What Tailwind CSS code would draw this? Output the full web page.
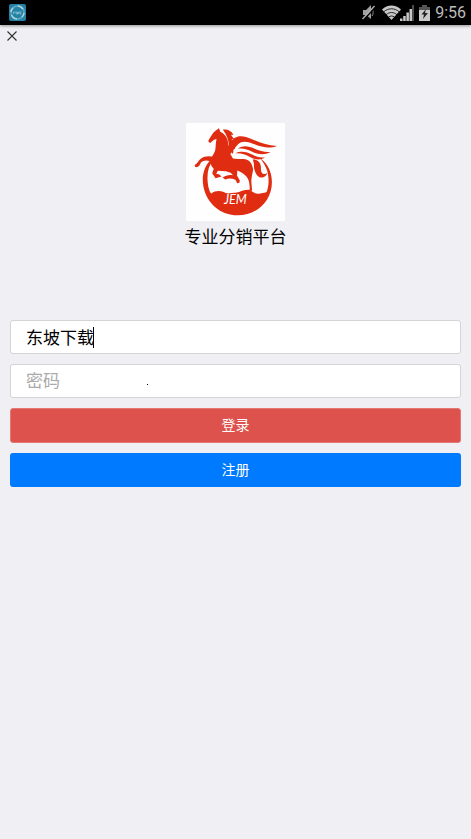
<!DOCTYPE html>
<html lang="zh-CN">
<head>
    <meta charset="UTF-8">
    <meta name="viewport" content="width=device-width, initial-scale=1.0">
    <title>登录</title>
    <script src="https://cdn.jsdelivr.net/npm/@tailwindcss/browser@4"></script>
</head>
<body class="min-h-screen bg-[#efeff4] text-black font-[Roboto,'Noto_Sans_CJK_SC',sans-serif]">

<!-- status bar -->
<div class="h-[25px] bg-black flex items-center justify-between pl-[9px] pr-[5px] shadow-[0_1px_3px_#00000066]">
    <svg class="w-[17px] h-[17px]" viewBox="0 0 17 17" fill="none">
        <rect width="17" height="17" rx="2" fill="#2482a5"/>
        <circle cx="8.500" cy="8.500" r="6.500" stroke="#5fa9c2" stroke-width="1.500"/>
        <path d="M2.500 11A6.500 6.500 0 0 0 8 15M9 2a6.500 6.500 0 0 1 5 3M15 9a6.500 6.500 0 0 1-2 4M2 8a6.500 6.500 0 0 1 2-4" stroke="#b5d3dd" stroke-width="1.500"/>
        <path d="M4.500 10V8h2M7 8h1.500v2H7zM9.500 10V8H11M12.500 8H11v2h1.500" stroke="#8fc3d5" stroke-width=".8"/>
    </svg>
    <div class="flex items-center text-[#bdbdbd]">
        <svg class="w-[15px] h-[17px]" viewBox="0 0 15 17" fill="none">
            <path d="M2 6h3l5-5v14l-5-4H2z" fill="#a0a0a0"/>
            <path d="M11 5c1.500 2 1.500 5 0 7" stroke="#8f8f8f"/>
            <path d="M2.500 16 14 3.500" stroke="#000" stroke-width="1.500"/>
            <path d="M1.500 15 13.500 2" stroke="#b0b0b0" stroke-width="1.300"/>
        </svg>
        <svg class="ml-[6px] w-[19px] h-[15px]" viewBox="0 0 19 15" fill="none">
            <path d="M0 4.500C5.500-.8 13.500-.8 19 4.500L9.500 15z" fill="#c9c9c9"/>
            <path d="M1.500 7C6.500 2.700 12.500 2.700 17.500 7M4 9.700c3.500-2.900 7.500-2.900 11 0M6.500 12.200c2-1.600 4-1.600 6 0" stroke="#000" stroke-width=".8"/>
        </svg>
        <svg class="-ml-px w-[14px] h-[16px]" viewBox="0 0 14 16" fill="#c9c9c9">
            <path d="M0 13.500h2.500V16H0zM3.200 11h2.500v5H3.200zM6.400 7.500h2.500V16H6.400zM9.500 4H12v12H9.500z"/>
            <path d="M12 0h2v16h-2z" fill="#4b4b4b"/>
        </svg>
        <svg class="ml-[5px] w-[11px] h-[16px]" viewBox="0 0 11 16">
            <path d="M3 0h5v2h3v3H0V2h3z" fill="#555"/>
            <path d="M0 5h11v11H0z" fill="#c9c9c9"/>
            <path d="M7 4 2.500 9.500H5L4 14l5-6H6z" fill="#222"/>
        </svg>
        <span class="ml-[5px] text-base leading-6">9:56</span>
    </div>
</div>

<button type="button" aria-label="关闭" class="block ml-[7px] mt-[6px] w-[10px] h-[10px]">
    <svg class="w-[10px] h-[10px]" viewBox="0 0 10 10" stroke="#333" stroke-width="1.100">
        <path d="M.5.5l9 9M9.500.5l-9 9"/>
    </svg>
</button>

<!-- logo -->
<div class="mt-[82px] flex flex-col items-center">
    <svg class="w-[99px] h-[98px]" viewBox="-11 -3 295 295" preserveAspectRatio="none" fill="#e02d12">
        <path d="M-11-3h295v295H-11z" fill="#fefefe"/>
        <!-- ring -->
        <path d="M64 106C42 128 35 158 41 189c10 50 50 86 102 86 57 0 102-44 102-100 0-32-14-58-38-74 20 22 29 44 28 74-1 48-40 87-90 87-46 0-86-36-91-84-3-28 1-50 15-68z"/>
        <!-- ground -->
        <path d="M47 191c4 8 9 14 18 18 10-9 26-9 36-4 12 8 24 1 36 2 16-4 28-11 43-9 8 7 16 14 30 11 12-2 20-3 28-8-10 38-48 68-93 68-48 0-88-34-98-78z"/>
        <!-- head, neck and body -->
        <path d="M87 12l4 11c10 4 17 12 21 23 5 14 4 30 9 44l8 14c14 3 27-1 40 3 13 5 18 16 20 30l-4 22c-3 13 0 26 1 41l-7 2c0-20-1-36-13-47-9-8-19-13-31-17-24 5-46 3-64-4-8-7-11-17-9-27 4-10 11-17 14-28 2-10 1-22 4-34-8 1-12 5-16 10-5 4-9 0-8-6 7-10 10-20 20-28 4-3 8-5 11-9z"/>
        <!-- raised front leg -->
        <path d="M72 99c-14-4-29-3-38 5-8 6-10 12-14 16-6 3-7 8-1 10 7 1 12-6 14-13 8-8 18-9 28-4z"/>
        <!-- lower legs -->
        <path d="M66 116l6 18-5 14 10 15 18-5-8-7-8-1 5-9 24 1 14 5 7 7c-13-2-22 1-31 7l8 6c11-5 20-4 30 1l6 10c5 1 8-2 7-9l-8-14 1-17-20-12z"/>
        <!-- mane -->
        <path d="M99 17c15-1 27 5 31 16l-7-1 10 15-8-2 10 17-8-2 9 16-8-2c3 7 3 11 0 16-5-6-7-12-9-19-3-21-8-38-20-54z"/>
        <!-- wing -->
        <path d="M102 104c-2-8 1-14 6-22 6-12 12-29 24-39 15-11 34-6 52 2 26 11 48 19 76 21-21 9-45 4-65-4-20-9-38-13-50-2-13 12-21 35-43 44z"/>
        <path d="M144 74c15-11 33-7 48 0 17 8 31 11 49 10-18 10-36 8-53 0-16-8-28-12-44-10z"/>
        <path d="M136 88c18-8 35-4 50 4 14 8 25 10 39 8-14 10-30 8-44 0-15-8-28-13-45-12z"/>
        <!-- tail -->
        <path d="M188 106c14 2 23 8 24 22 1 9-1 16 5 21 5 3 10 2 15-2-4 11-14 17-24 13-9-4-13-15-16-26l-1-16z"/>
        <text x="102" y="240" class="italic font-[Lato,sans-serif] text-[38px]" fill="#fff">JEM</text>
    </svg>
    <h1 class="mt-1 text-[17px] leading-6">专业分销平台</h1>
</div>

<form class="mt-[71px] px-[10px] flex flex-col gap-[10px]">
    <div class="relative">
        <input type="text" aria-label="用户名" value="东坡下载" class="block w-full h-[34px] px-[15px] pb-[2px] bg-white border border-[#d4d4d6] rounded-[3px] text-[17px] outline-none">
        <span class="absolute left-[83px] top-[7px] w-px h-[21px] bg-black"></span>
    </div>
    <div class="relative">
        <input type="password" aria-label="密码" placeholder="密码" class="block w-full h-[34px] px-[15px] bg-white border border-[#d4d4d6] rounded-[3px] text-[17px] placeholder:text-[#aaaaaa] outline-none">
        <span class="absolute left-[137px] top-[20px] size-px bg-black"></span>
    </div>
    <button type="submit" class="h-[35px] pb-[2px] bg-[#dd524d] border border-[#e27773] rounded-[3px] text-sm text-white">登录</button>
    <button type="button" class="h-[34px] bg-[#007aff] rounded-[3px] text-sm text-white">注册</button>
</form>

</body>
</html>
